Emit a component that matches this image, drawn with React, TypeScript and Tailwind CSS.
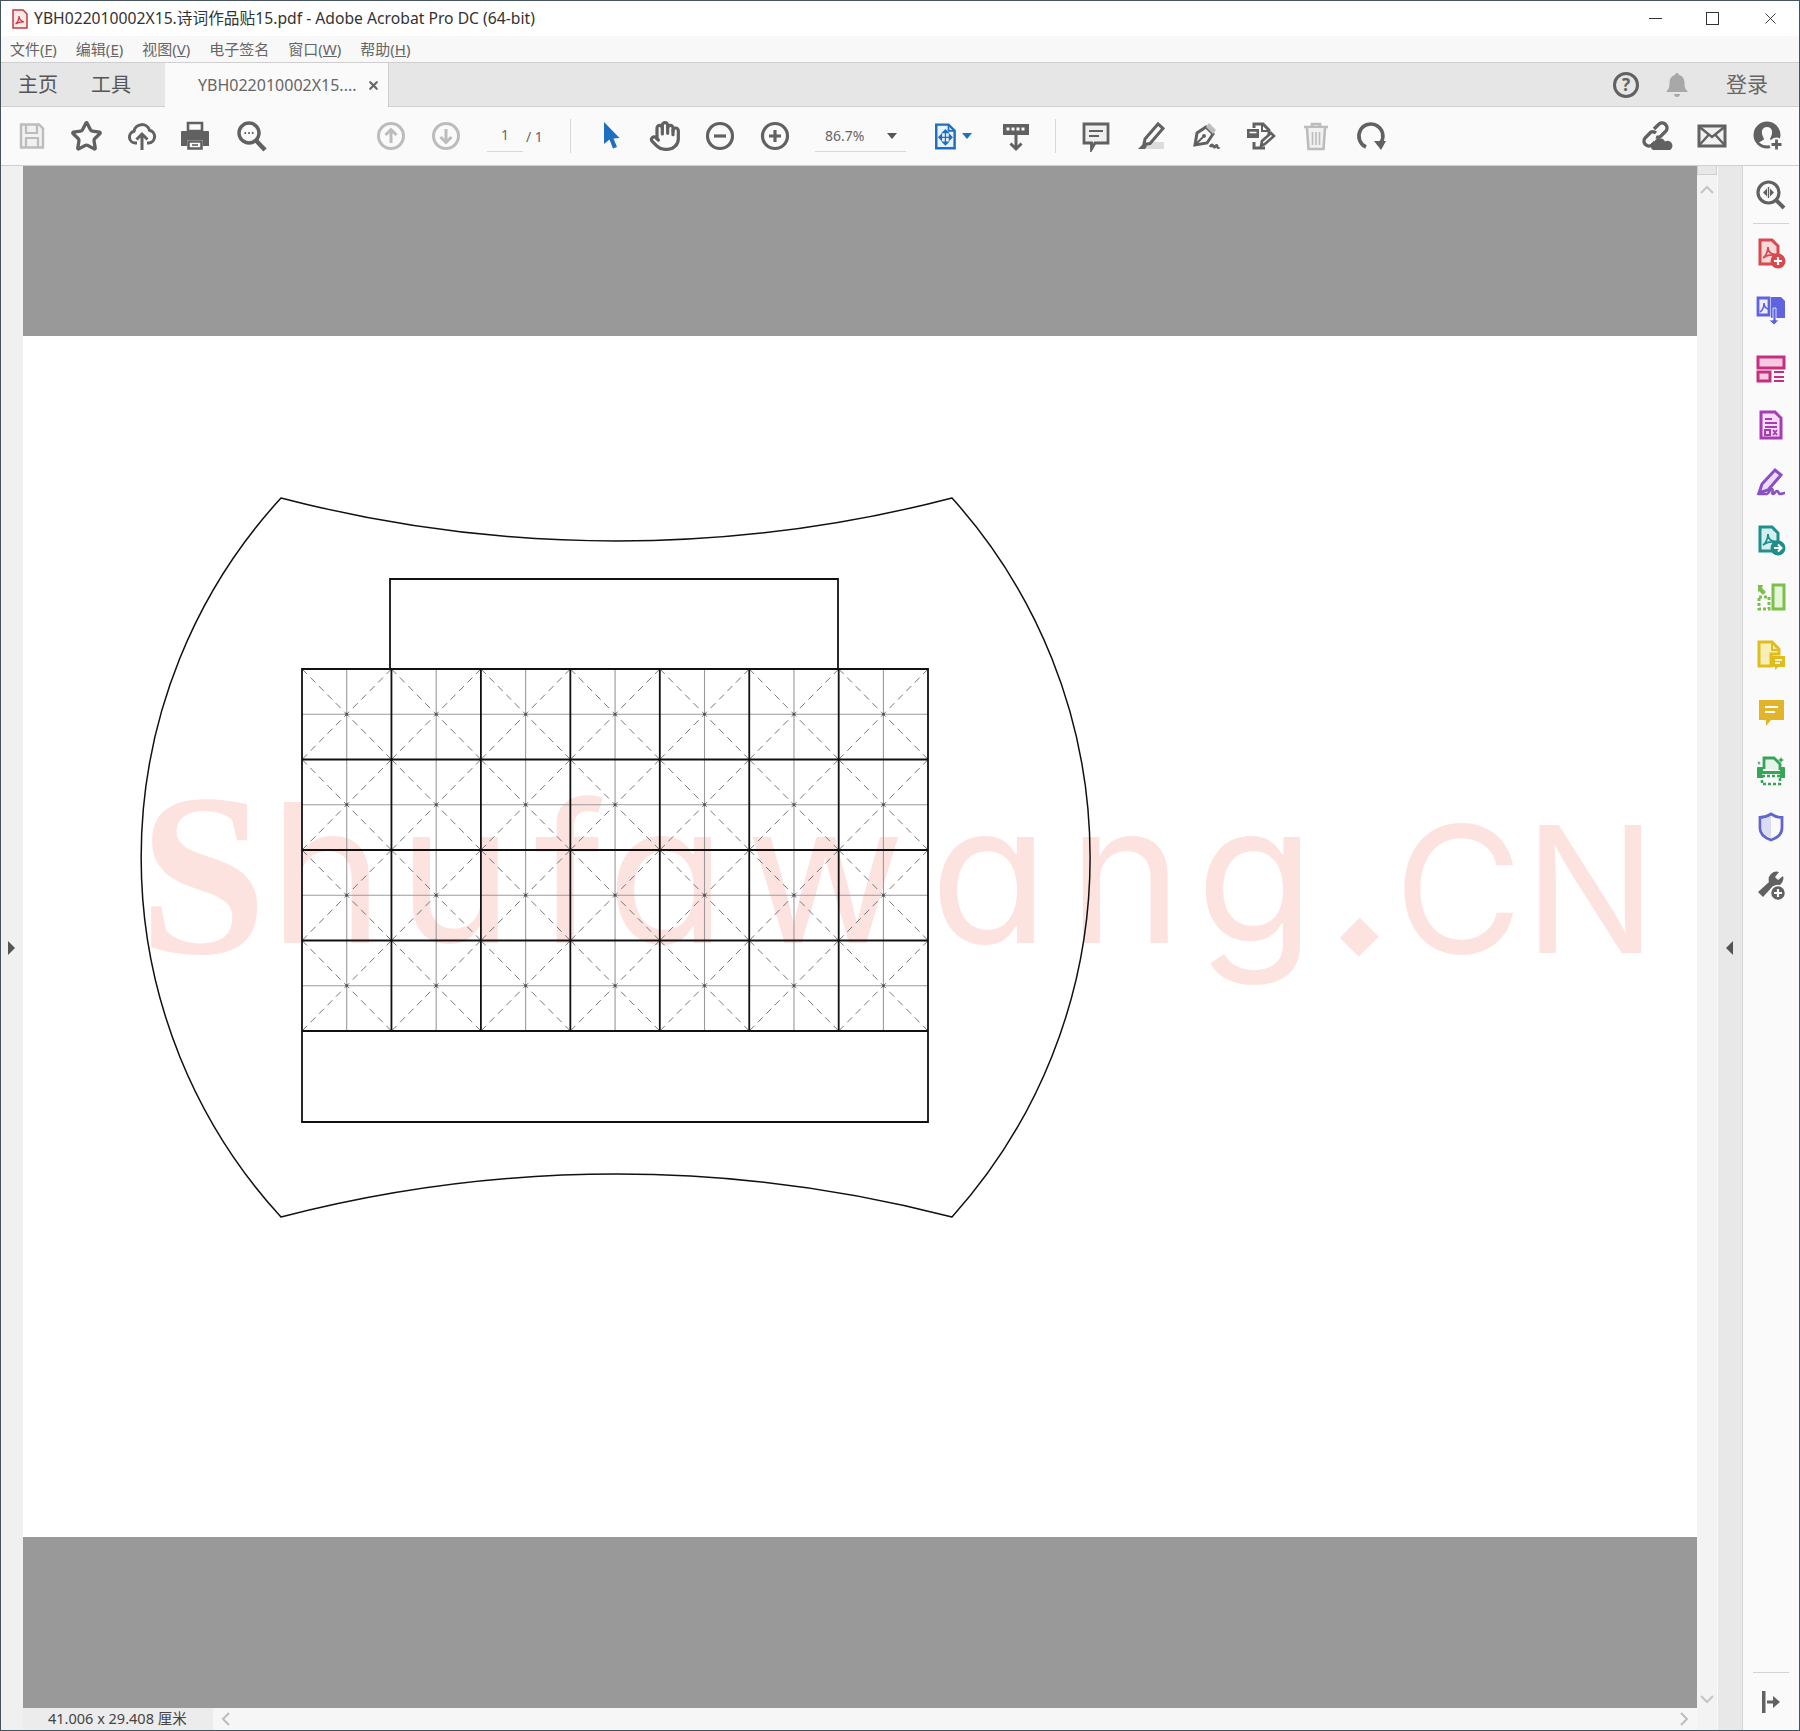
import React from 'react';
import { Hand, Star, X } from 'lucide-react';

const Slot: React.FC<{ children: React.ReactNode }> = ({ children }) => (
  <div className="w-[55px] h-[32px] shrink-0 flex items-center justify-center">{children}</div>
);

const Ico: React.FC<{ children: React.ReactNode; className?: string }> = ({ children, className }) => (
  <svg viewBox="0 0 32 32" fill="none" className={`w-[32px] h-[32px] ${className ?? ''}`}>{children}</svg>
);

const GRAY = '#616161';
const LIGHT = '#bcbcbc';

const ToolbarLeft = () => (
  <>
    <Slot>
      <Ico>
        <path d="M5 4.500h18l4 4v19H5z" stroke={LIGHT} strokeWidth="2.400" fill="#f1f1f1" />
        <path d="M10 5v8h11V5M10 27v-9h12v9" stroke={LIGHT} strokeWidth="2.200" />
      </Ico>
    </Slot>
    <Slot><Star size={33} color={GRAY} strokeWidth={2.400} /></Slot>
    <Slot>
      <Ico>
        <path d="M11 23H9a6 6 0 0 1-1-11.800 8 8 0 0 1 15.500-1 6.500 6.500 0 0 1-.5 12.800h-2" stroke={GRAY} strokeWidth="3" />
        <path d="M16 30V14M10.500 19.500 16 14l5.500 5.500" stroke={GRAY} strokeWidth="3" />
      </Ico>
    </Slot>
    <Slot>
      <Ico>
        <g transform="translate(-2 0)">
          <path d="M9 3h14v8H9z" stroke={GRAY} strokeWidth="2.600" />
          <path d="M3 11h26a1 1 0 0 1 1 1v14h-6v-6H8v6H2V12a1 1 0 0 1 1-1z" fill={GRAY} />
          <path d="M9.500 21.500h13v7h-13z" stroke={GRAY} strokeWidth="2.600" />
          <path d="M13 25h6" stroke={GRAY} strokeWidth="1.600" />
        </g>
      </Ico>
    </Slot>
    <Slot>
      <Ico>
        <g transform="translate(-1 0)">
          <circle cx="14" cy="13" r="10" stroke={GRAY} strokeWidth="3.400" />
          <path d="M21 20.500 30 30" stroke={GRAY} strokeWidth="4.400" />
          <path d="M9.500 13h1.600M13.200 13h1.600M16.900 13h1.600" stroke={GRAY} strokeWidth="2.200" />
        </g>
      </Ico>
    </Slot>
  </>
);

const PageNav = () => (
  <>
    <div className="ml-[84px] flex">
      <Slot>
        <Ico>
          <circle cx="16" cy="16" r="12.500" stroke={LIGHT} strokeWidth="3" />
          <path d="M16 23V10M10.500 15 16 9.500l5.500 5.500" stroke={LIGHT} strokeWidth="3" />
        </Ico>
      </Slot>
      <Slot>
        <Ico>
          <circle cx="16" cy="16" r="12.500" stroke={LIGHT} strokeWidth="3" />
          <path d="M16 9v13M10.500 17 16 22.500l5.500-5.500" stroke={LIGHT} strokeWidth="3" />
        </Ico>
      </Slot>
    </div>
    <div className="ml-[14px] w-[36px] h-[32px] border-b border-[#d8d8d8] text-center text-[14px] leading-[30px] text-[#666]">1</div>
    <div className="ml-[3px] w-[30px] text-[14px] text-[#666]">/ 1</div>
    <div className="ml-[14px] w-px h-[34px] bg-[#d9d9d9]" />
  </>
);

const ViewTools = () => (
  <div className="ml-[11px] flex">
    <Slot>
      <Ico>
        <path d="M10 2v22l5.500-4.500 3.500 9 4-1.500-3.500-8.500 6-.5z" fill="#1f6fc0" />
      </Ico>
    </Slot>
    <Slot><Hand size={32} color={GRAY} strokeWidth={2.400} /></Slot>
    <Slot>
      <Ico>
        <circle cx="16" cy="16" r="12.500" stroke={GRAY} strokeWidth="3.200" />
        <path d="M10 16h12" stroke={GRAY} strokeWidth="3.200" />
      </Ico>
    </Slot>
    <Slot>
      <Ico>
        <circle cx="16" cy="16" r="12.500" stroke={GRAY} strokeWidth="3.200" />
        <path d="M10 16h12M16 10v12" stroke={GRAY} strokeWidth="3.200" />
      </Ico>
    </Slot>
  </div>
);

const ZoomField = () => (
  <>
    <div className="ml-[13px] w-[91px] h-[32px] border-b border-[#d8d8d8] flex items-center text-[14px] text-[#666]">
      <span className="ml-[10px]">86.7%</span>
      <span className="ml-[23px] w-0 h-0 border-x-[5px] border-x-transparent border-t-[6px] border-t-[#555]" />
    </div>
    <div className="ml-[25px] flex items-center w-[46px]">
      <Ico className="w-[28px]! h-[32px]!">
        <path d="M6 3h14l7 7v20H6z" stroke="#1f6fc0" strokeWidth="2.800" fill="#eaf2fa" />
        <path d="M20 3v7h7" stroke="#1f6fc0" strokeWidth="2" />
        <path d="M16.500 10v15M10 17.500h13M16.500 9l-3 3h6zM16.500 26l-3-3h6zM9 17.500l3-3v6zM24 17.500l-3-3v6z" stroke="#1f6fc0" strokeWidth="1.500" fill="#1f6fc0" />
      </Ico>
      <span className="ml-[3px] w-0 h-0 border-x-[5px] border-x-transparent border-t-[6px] border-t-[#1f6fc0]" />
    </div>
    <div className="ml-[23px] w-[32px] flex justify-center">
      <Ico>
        <path d="M3 4h26v11H3z" fill={GRAY} />
        <path d="M6.500 7.500h3v3h-3zM11.500 7.500h3v3h-3zM16.500 7.500h3v3h-3zM21.500 7.500h3v3h-3z" fill="#fafafa" />
        <path d="M16 15v14M10.500 23.500 16 29l5.500-5.500" stroke={GRAY} strokeWidth="3" />
      </Ico>
    </div>
    <div className="ml-[23px] w-px h-[34px] bg-[#d9d9d9]" />
  </>
);

const CommentTools = () => (
  <div className="ml-[12px] flex">
    <Slot>
      <Ico>
        <path d="M4 4h24v19H15l-3.500 6v-6H4z" fill="#efefef" stroke={GRAY} strokeWidth="2.800" />
        <path d="M9 11h14M9 16h10" stroke={GRAY} strokeWidth="2" />
      </Ico>
    </Slot>
    <Slot>
      <Ico>
        <path d="M7 29h22v-7H7z" fill="#dcdcdc" />
        <path d="M10 19 23 4l5 4.500-13 15-6 1z" stroke={GRAY} strokeWidth="3" />
        <path d="M3 29l6-6 3 3-2 3z" fill={GRAY} />
      </Ico>
    </Slot>
    <Slot>
      <Ico>
        <g transform="translate(-1 0)">
          <path d="M6 25 8 13l9-6 7 7-6 9z" stroke={GRAY} strokeWidth="3" />
          <path d="M17 7l3-4 7 7-3 4" fill="#bdbdbd" />
          <path d="M6 25 14 17" stroke={GRAY} strokeWidth="2" />
          <circle cx="15" cy="16" r="2" fill={GRAY} />
          <path d="M21 27c2-4 3-1 4 0s2-3 3-1 1.500 2 2 1" stroke={GRAY} strokeWidth="2.800" />
        </g>
      </Ico>
    </Slot>
    <Slot>
      <Ico>
        <g transform="translate(-2 0)">
          <path d="M11 8V4h9l6 6v5M11 22v6h11" stroke={GRAY} strokeWidth="3" />
          <path d="M19 4v7h7" stroke={GRAY} strokeWidth="2" />
          <path d="M4 9h12v9H4z" fill={GRAY} />
          <path d="M6.500 12.500h7" stroke="#fafafa" strokeWidth="1.600" />
          <path d="M18 26l1-5 9-8 3 3-9 8z" stroke={GRAY} strokeWidth="2.600" />
        </g>
      </Ico>
    </Slot>
    <Slot>
      <Ico>
        <path d="M4 7h24M12 7V4h8v3" stroke={LIGHT} strokeWidth="2.600" />
        <path d="M7 8l1.500 21h15L25 8" stroke={LIGHT} strokeWidth="2.600" fill="#f1f1f1" />
        <path d="M12.500 12v13M16 12v13M19.500 12v13" stroke={LIGHT} strokeWidth="1.600" />
      </Ico>
    </Slot>
    <Slot>
      <Ico>
        <path d="M11 27A12 12 0 1 1 26 22.500" stroke={GRAY} strokeWidth="3.600" />
        <path d="M19 21h12l-5 9z" fill={GRAY} />
      </Ico>
    </Slot>
  </div>
);

const ShareTools = () => (
  <div className="ml-auto pr-[4px] flex">
    <Slot>
      <Ico>
        <path d="M14 9l5-5a5 5 0 0 1 7 7l-5 5a5 5 0 0 1-5 1" stroke={GRAY} strokeWidth="3.400" transform="translate(-2 0)" />
        <path d="M16 13a5 5 0 0 0-5-1l-6 6a5 5 0 0 0 7 7l3-3" stroke={GRAY} strokeWidth="3.400" transform="translate(-2 0)" />
        <path d="M11 30a4 4 0 0 1 1-7.500 6 6 0 0 1 11-1 4.500 4.500 0 0 1 5 8.500z" fill={GRAY} />
      </Ico>
    </Slot>
    <Slot>
      <Ico>
        <g transform="translate(-1 0)">
          <path d="M3 6h26v20H3z" fill="#f1f1f1" stroke={GRAY} strokeWidth="3" />
          <path d="M3.500 7 16 17 28.500 7M3.500 25l9-10M28.500 25l-9-10" stroke={GRAY} strokeWidth="2.400" />
        </g>
      </Ico>
    </Slot>
    <Slot>
      <Ico>
        <circle cx="15" cy="15" r="13.500" fill={GRAY} />
        <path d="M15 7c4 0 5.500 3 5 6.500-.5 3-2 5-2 6l5 3a12 12 0 0 1-16 0l5-3c0-1-1.500-3-2-6C9.500 10 11 7 15 7z" fill="#fafafa" />
        <circle cx="24.500" cy="24.500" r="7" fill="#fafafa" />
        <path d="M19.500 24.500h10M24.500 19.500v10" stroke={GRAY} strokeWidth="2.800" />
      </Ico>
    </Slot>
  </div>
);

const PdfGlyph: React.FC<{ c: string }> = ({ c }) => (
  <path d="M8 21c3-2 5-7 5-11 0 4 3 7 7 8-4-.5-9 .5-12 3z" stroke={c} strokeWidth="1.800" />
);

const RAIL: React.ReactNode[] = [
  <Ico key="add">
    <path d="M5 3h12l6 6v9h-4v9H5z" fill="#f7d9d9" stroke="#d8494f" strokeWidth="3" />
    <PdfGlyph c="#d8494f" />
    <circle cx="23" cy="24" r="7.500" fill="#d8494f" />
    <path d="M19 24h8M23 20v8" stroke="#fff" strokeWidth="2.200" />
  </Ico>,
  <Ico key="combine">
    <path d="M3 4h11v17H3z" fill="#eeeefc" stroke="#5f63e0" strokeWidth="2.800" />
    <path d="M16 3h10l4 4v17H16z" fill="#5f63e0" />
    <path d="M5 18c3-2 4-5 4-9 0 3 1 5 4 6" stroke="#5f63e0" strokeWidth="1.600" />
    <path d="M18 14v12h-4l5 5 5-5h-3V14z" fill="#5f63e0" stroke="#fafafa" strokeWidth="0.800" />
  </Ico>,
  <Ico key="layout">
    <path d="M3 5h26v11H3z" fill="#f6c9e0" stroke="#c4307f" strokeWidth="3" />
    <path d="M3 20h12v9H3z" fill="#f6c9e0" stroke="#c4307f" strokeWidth="3" />
    <path d="M19 20h10M19 25h10M19 29h10" stroke="#c4307f" strokeWidth="2" />
  </Ico>,
  <Ico key="form">
    <path d="M6 3h14l6 6v20H6z" fill="#f3dcf5" stroke="#a83db3" strokeWidth="3" />
    <path d="M10 10h7M10 14h12M10 18h12" stroke="#a83db3" strokeWidth="1.800" />
    <path d="M10 21h5v5h-5zM18 21l4 5M22 21l-4 5" stroke="#a83db3" strokeWidth="2" />
  </Ico>,
  <Ico key="sign">
    <path d="M4 27 7 18 20 4l6 5-13 15z" fill="#ecdcf8" stroke="#8a4fc8" strokeWidth="3" />
    <path d="M3 28h9c2 0 3-6 5-5s-1 5 1 5 2-3 4-3 1 3 3 3 3-1 5-1" stroke="#8a4fc8" strokeWidth="2.600" />
  </Ico>,
  <Ico key="export">
    <path d="M5 3h12l6 6v9h-4v9H5z" fill="#d4eeee" stroke="#1f8f8c" strokeWidth="3" />
    <PdfGlyph c="#1f8f8c" />
    <circle cx="23" cy="24" r="7.500" fill="#1f8f8c" />
    <path d="M19 24h7M23 20.500l3.500 3.500-3.500 3.500" stroke="#fff" strokeWidth="2" />
  </Ico>,
  <Ico key="organize">
    <path d="M18 4h11v24H18z" fill="#e6f4da" stroke="#7cc04b" strokeWidth="3" />
    <path d="M4 16h10v12H4z" stroke="#7cc04b" strokeWidth="3" strokeDasharray="3 2" />
    <path d="M3 4h5l-1 3 4 4-3 3-4-4-1 2z" fill="#7cc04b" />
  </Ico>,
  <Ico key="note">
    <path d="M4 3h13l7 7v5H16v12H4z" fill="#f8eeb8" stroke="#e0bd1c" strokeWidth="3" />
    <path d="M17 3v8h7" stroke="#e0bd1c" strokeWidth="2" />
    <path d="M17 17h13v11h-7l-3 3v-3h-3z" fill="#e0bd1c" />
    <path d="M20 21h7M20 24h5" stroke="#fff" strokeWidth="1.500" />
  </Ico>,
  <Ico key="comment">
    <path d="M4 4h25v20H16l-5 6v-6H4z" fill="#e1b429" />
    <path d="M10 11h13M10 16h10" stroke="#fff" strokeWidth="2.200" />
  </Ico>,
  <Ico key="print">
    <path d="M9 15V4h10l6 6v6" fill="#e4f4e8" stroke="#37a558" strokeWidth="2.800" />
    <path d="M3 13h5v4h17v-4h4a1 1 0 0 1 1 1v10h-5v-4H7v4H2V14a1 1 0 0 1 1-1z" fill="#37a558" />
    <path d="M7 22h18v8H7z" stroke="#37a558" strokeWidth="2.600" strokeDasharray="3 2" />
    <path d="M26 3l1 2 2 1-2 1-1 2-1-2-2-1 2-1zM4 7l.7 1.500L6 9l-1.300.5L4 11l-.7-1.500L2 9l1.300-.5z" fill="#37a558" />
  </Ico>,
  <Ico key="protect">
    <path d="M16 3c3 2 7 3.500 11 3.500V17c0 6-5 10-11 12C10 27 5 23 5 17V6.500C9 6.500 13 5 16 3z" fill="#fafafa" stroke="#6266cc" strokeWidth="2.800" />
    <path d="M16 5c-3 1.500-6 3-9 3v9c0 4.500 4 8 9 10z" fill="#dadbf5" />
  </Ico>,
  <Ico key="more">
    <path d="M28 7l-5 4-3-3 4-5a8 8 0 0 0-10 10L3 23l5 5 10-11a8 8 0 0 0 10-10z" fill={GRAY} />
    <circle cx="23" cy="24" r="7.500" fill={GRAY} stroke="#fafafa" strokeWidth="1.500" />
    <path d="M19 24h8M23 20v8" stroke="#fafafa" strokeWidth="2.200" />
  </Ico>,
];

// page drawing, in screen coordinates so the numbers can be read off the reference
const COLS = Array.from({ length: 7 }, (_, i) => i);
const ROWS = Array.from({ length: 4 }, (_, i) => i);
const X0 = 302;
const Y0 = 669;
const CW = 89.45;
const CH = 90.5;

const Cell: React.FC<{ c: number; r: number }> = ({ c, r }) => {
  const x = X0 + c * CW;
  const y = Y0 + r * CH;
  return (
    <g>
      <path d={`M${x + CW / 2} ${y}V${y + CH}M${x} ${y + CH / 2}H${x + CW}`} stroke="#9a9a9a" strokeWidth="1.100" />
      <path d={`M${x} ${y}L${x + CW} ${y + CH}M${x + CW} ${y}L${x} ${y + CH}`} stroke="#666" strokeWidth="0.900" strokeDasharray="7 5" />
      <circle cx={x + CW / 2} cy={y + CH / 2} r="1.400" fill="#555" />
    </g>
  );
};

const Sheet = () => (
  <svg viewBox="23 336 1674 1201" className="block w-[1674px] h-[1201px]" fill="none">
    <g className="fill-[#fde3e0]">
      <text x="139" y="953" className="font-['Liberation_Serif',serif] font-bold text-[230px]">S</text>
      <text x="269 398 534 607 746 930 1068 1196" y="943" className="font-['Inter',sans-serif] font-normal text-[194px] [font-feature-settings:'cv11']">hufawang</text>
      <text x="1332.500" y="951.500" transform="rotate(45 1359 938)" className="font-['Liberation_Sans',sans-serif] font-bold text-[190px]">.</text>
      <text x="1394 1524" y="953" className="font-['Inter',sans-serif] font-normal text-[176px]">CN</text>
    </g>
    {ROWS.map(r => COLS.map(c => <Cell key={`${r}-${c}`} c={c} r={r} />))}
    <path
      d="M281 498A1330 1330 0 0 0 952 498A537 537 0 0 1 952 1217A1330 1330 0 0 0 281 1217A532 532 0 0 1 281 498Z"
      stroke="#111"
      strokeWidth="1.500"
    />
    <g stroke="#111" strokeWidth="1.800">
      <path d="M390 669V579H838V669" />
      <path d="M302 669H928V1122H302Z" />
      {COLS.slice(1).map(c => <path key={c} d={`M${X0 + c * CW} ${Y0}V1031`} />)}
      {[1, 2, 3, 4].map(r => <path key={r} d={`M${X0} ${Y0 + r * CH}H928`} />)}
    </g>
  </svg>
);

const MENU = [
  ['文件', 'F'],
  ['编辑', 'E'],
  ['视图', 'V'],
  ['电子签名', ''],
  ['窗口', 'W'],
  ['帮助', 'H'],
];

export default function App() {
  return (
    <div className="w-[1800px] h-[1731px] flex flex-col border border-[#44535d] bg-white overflow-hidden font-['Noto_Sans','Noto_Sans_CJK_SC',sans-serif]">
      {/* title bar */}
      <div className="h-[35px] shrink-0 flex items-center bg-white">
        <svg viewBox="0 0 16 20" className="ml-[11px] w-[16px] h-[20px]" fill="none">
          <path d="M1 1h10l4 4v14H1z" fill="#fbeaea" stroke="#c9383c" strokeWidth="1.500" />
          <path d="M3.500 15c2-1.500 3.500-4.500 3.500-8 0 3 2 5 5 6-3-.3-6 .5-8.500 2z" stroke="#c9383c" strokeWidth="1.200" />
        </svg>
        <span className="ml-[6px] text-[15.700px] text-[#333]">YBH022010002X15.诗词作品贴15.pdf - Adobe Acrobat Pro DC (64-bit)</span>
        <div className="ml-auto mr-[19px] flex items-center">
          <span className="w-[13px] h-px bg-[#333]" />
          <span className="ml-[44px] w-[13px] h-[13px] border border-[#333]" />
          <X size={19} strokeWidth={1.200} color="#333" className="ml-[42px]" />
        </div>
      </div>
      {/* menu */}
      <div className="h-[26px] shrink-0 flex items-center pl-[9px] gap-[19px] bg-[#f8f8f8] text-[15px] text-[#666]">
        {MENU.map(([label, key]) => (
          <span key={label}>
            {label}
            {key && <>(<span className="underline">{key}</span>)</>}
          </span>
        ))}
      </div>
      {/* tabs */}
      <div className="h-[45px] shrink-0 flex items-stretch bg-[#e6e6e6] border-y border-[#cfcfcf] text-[#555]">
        <span className="ml-[17px] self-center text-[20px]">主页</span>
        <span className="ml-[33px] self-center text-[20px]">工具</span>
        <div className="ml-[34px] -mb-px w-[224px] flex items-center bg-[#fafafa] border-r border-[#cfcfcf] text-[16px] text-[#666]">
          <span className="ml-[33px]">YBH022010002X15....</span>
          <X size={13} strokeWidth={4} color="#666" className="ml-[10px]" />
        </div>
        <div className="ml-auto flex items-center">
          <svg viewBox="0 0 28 28" className="w-[28px] h-[28px]" fill="none">
            <circle cx="14" cy="14" r="11.500" stroke={GRAY} strokeWidth="3" />
            <text x="14" y="20" textAnchor="middle" fill={GRAY} className="text-[17px] font-bold">?</text>
          </svg>
          <svg viewBox="0 0 24 28" className="ml-[25px] w-[24px] h-[28px]" fill="#a8a8a8">
            <path d="M12 2c1.500 0 2 1 2 2 4 1 5.500 4 5.500 8 0 5 1 6 3.500 9H1c2.500-3 3.500-4 3.500-9 0-4 1.500-7 5.500-8 0-1 .5-2 2-2zM9 23h6c0 2-1.500 3-3 3s-3-1-3-3z" />
          </svg>
          <span className="ml-[37px] mr-[31px] text-[21px] text-[#666]">登录</span>
        </div>
      </div>
      {/* toolbar */}
      <div className="h-[58px] shrink-0 flex items-center pl-[3px] bg-[#fafafa]">
        <ToolbarLeft />
        <PageNav />
        <ViewTools />
        <ZoomField />
        <CommentTools />
        <ShareTools />
      </div>
      {/* body */}
      <div className="flex-1 min-h-0 flex border-t border-[#d0d0d0]">
        <div className="w-[22px] shrink-0 bg-[#f0f0f0] flex items-center justify-center pr-[2px]">
          <span className="w-0 h-0 border-y-[7px] border-y-transparent border-l-[7px] border-l-[#555]" />
        </div>
        <div className="w-[1674px] shrink-0 flex flex-col">
          <div className="h-[170px] bg-[#999999]" />
          <div className="h-[1201px] bg-white"><Sheet /></div>
          <div className="h-[171px] bg-[#999999]" />
          <div className="flex-1 flex items-stretch bg-[#f6f6f6] text-[14.500px] text-[#444]">
            <div className="w-[190px] bg-[#ececec] pl-[25px] flex items-center">41.006 x 29.408 厘米</div>
            <div className="flex-1 flex items-center justify-between px-[8px]">
              <svg viewBox="0 0 10 14" className="w-[10px] h-[14px]" fill="none" stroke="#bdbdbd" strokeWidth="2"><path d="M8 1 2 7l6 6" /></svg>
              <svg viewBox="0 0 10 14" className="w-[10px] h-[14px]" fill="none" stroke="#bdbdbd" strokeWidth="2"><path d="M2 1l6 6-6 6" /></svg>
            </div>
          </div>
        </div>
        <div className="w-[21px] shrink-0 flex flex-col items-center bg-[#f3f3f3] border-r border-[#fafafa]">
          <div className="w-full h-[9px] bg-[#e8e8e8] border-b border-x border-[#cfcfcf]" />
          <svg viewBox="0 0 14 10" className="mt-[10px] w-[14px] h-[10px]" fill="none" stroke="#c4c4c4" strokeWidth="2"><path d="M1 8l6-6 6 6" /></svg>
          <svg viewBox="0 0 14 10" className="mt-auto mb-[26px] w-[14px] h-[10px]" fill="none" stroke="#c4c4c4" strokeWidth="2"><path d="M1 2l6 6 6-6" /></svg>
        </div>
        <div className="w-[24px] shrink-0 bg-[#e8e8e8] flex items-center justify-center pr-[1px]">
          <span className="w-0 h-0 border-y-[7px] border-y-transparent border-r-[7px] border-r-[#555]" />
        </div>
        <div className="flex-1 flex flex-col items-center bg-[#fafafa] border-l border-[#d4d4d4] pr-[1px]">
          <div className="h-[57px] w-full flex items-center justify-center">
            <Ico>
              <circle cx="13.500" cy="13.500" r="10.500" stroke={GRAY} strokeWidth="3.200" />
              <path d="M21 21l8 8" stroke={GRAY} strokeWidth="4" />
              <path d="M13.500 8v11" stroke={GRAY} strokeWidth="1.400" />
              <path d="M12 9.500v8l-4-4zM15 9.500v8l4-4z" fill={GRAY} />
            </Ico>
          </div>
          <div className="w-[36px] h-px bg-[#d4d4d4]" />
          {RAIL.map((icon, i) => (
            <div key={i} className="h-[57.450px] w-full flex items-center justify-center">{icon}</div>
          ))}
          <div className="mt-auto w-[36px] h-px bg-[#d4d4d4]" />
          <div className="h-[57px] flex items-center justify-center">
            <svg viewBox="0 0 20 22" className="w-[20px] h-[22px]" fill={GRAY}>
              <path d="M1 0h3.500v22H1zM6 9.500h6V5l7 6-7 6v-4.500H6z" />
            </svg>
          </div>
        </div>
      </div>
    </div>
  );
}
